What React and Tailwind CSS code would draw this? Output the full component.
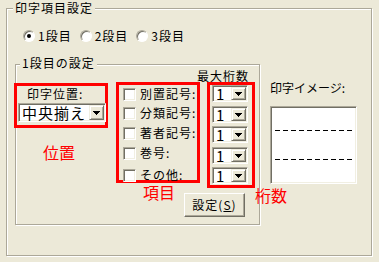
import React from "react";

const sunken =
  "border border-t-[#aca899] border-l-[#aca899] border-r-white border-b-white shadow-[inset_1px_1px_0_#716f64,inset_-1px_-1px_0_#f1efe2]";
const raised =
  "border border-t-[#f1efe2] border-l-[#f1efe2] border-r-[#716f64] border-b-[#716f64] shadow-[inset_1px_1px_0_#fff,inset_-1px_-1px_0_#aca899]";
const etched =
  "border border-[#aca899] shadow-[inset_1px_1px_0_#fff,1px_1px_0_#fff]";

function Arrow() {
  return (
    <svg width="7" height="4" viewBox="0 0 7 4" shapeRendering="crispEdges">
      <path d="M0 0h7v1H0zM1 1h5v1H1zM2 2h3v1H2zM3 3h1v1H3z" fill="#000" />
    </svg>
  );
}

function Combo({ value, className }) {
  return (
    <div className={`flex bg-white p-[1px] ${sunken} ${className}`}>
      <div className="flex-1 pl-[2px] text-[15px] leading-none flex items-center tracking-[1px]">
        {value}
      </div>
      <div className={`flex items-center justify-center bg-[#ece9d8] ${raised} w-[15px]`}>
        <Arrow />
      </div>
    </div>
  );
}

function Check({ label, className }) {
  return (
    <div className={`flex items-center h-[16px] ml-[4px] ${className}`}>
      <div className={`w-[13px] h-[13px] bg-white ${sunken}`}></div>
      <span className="ml-[4px] leading-[14px] tracking-[1px] whitespace-nowrap">{label}</span>
    </div>
  );
}

function Radio({ label, checked, className = "" }) {
  return (
    <div className={`flex items-center ${className}`}>
      <div className="w-[12px] h-[12px] rounded-full bg-white border border-t-[#aca899] border-l-[#aca899] border-r-white border-b-white shadow-[inset_1px_1px_0_#716f64] flex items-center justify-center">
        {checked && <div className="w-[4px] h-[4px] rounded-full bg-black"></div>}
      </div>
      <span className="ml-[3px] tracking-[1px]">{label}</span>
    </div>
  );
}

export default function App() {
  return (
    <div className="w-[379px] h-[262px] overflow-hidden bg-[#ece9d8] pt-[8px] pl-[6px] font-['Noto_Sans_CJK_JP',sans-serif] text-[12px] leading-[16px] text-black">
      <div className={`relative w-[366px] h-[248px] ${etched}`}>
        <span className="absolute -top-[9px] left-[6px] bg-[#ece9d8] px-[2px] tracking-[1px]">
          印字項目設定
        </span>

        <div className="flex items-center h-[16px] mt-[19px] ml-[16px]">
          <Radio checked label="1段目" />
          <Radio label="2段目" className="ml-[8px]" />
          <Radio label="3段目" className="ml-[8px]" />
        </div>

        <div className="flex items-start mt-[20px] ml-[8px]">
          <div className={`relative w-[245px] h-[161px] ${etched}`}>
            <span className="absolute -top-[10px] left-[4px] bg-[#ece9d8] px-[2px] tracking-[1px]">
              1段目の設定
            </span>

            <div className="flex items-start mt-[17px]">
              {/* 位置 */}
              <div className="flex flex-col mt-[1px] -ml-[2px]">
                <div className="w-[94px] h-[45px] border-[3px] border-[#ff0000]">
                  <div className="ml-[10px] tracking-[1px]">印字位置:</div>
                  <Combo value="中央揃え" className="ml-[1px] mt-[1px] w-[88px] h-[19px]" />
                </div>
                <div className="ml-[29px] mt-[16px] text-[16px] leading-[16px] text-[#ff0000]">位置</div>
              </div>

              {/* 項目 */}
              <div className="flex flex-col ml-[8px]">
                <div className="w-[84px] h-[101px] border-[3px] border-[#ff0000]">
                  <Check label="別置記号:" className="mt-[1px]" />
                  <Check label="分類記号:" className="mt-[3px]" />
                  <Check label="著者記号:" className="mt-[4px]" />
                  <Check label="巻号:" className="mt-[4px]" />
                  <Check label="その他:" className="mt-[6px]" />
                </div>
                <div className="ml-[27px] mt-[1px] text-[16px] leading-[16px] text-[#ff0000]">項目</div>
              </div>

              {/* 桁数 */}
              <div className="flex flex-col ml-[7px]">
                <div className="-mt-[14px] h-[14px] -ml-[10px] tracking-[1px] whitespace-nowrap">最大桁数</div>
                <div className="w-[48px] h-[106px] border-[3px] border-[#ff0000]">
                  <Combo value="1" className="ml-[2px] w-[36px] h-[17px]" />
                  <Combo value="1" className="ml-[2px] mt-[4px] w-[36px] h-[17px]" />
                  <Combo value="1" className="ml-[2px] mt-[3px] w-[36px] h-[17px]" />
                  <Combo value="1" className="ml-[2px] mt-[4px] w-[36px] h-[17px]" />
                  <Combo value="1" className="ml-[2px] mt-[3px] w-[36px] h-[17px]" />
                </div>
                <div className="flex items-start">
                  <button
                    type="button"
                    className="-ml-[23px] mt-[5px] w-[61px] h-[24px] shrink-0 bg-[#ece9d8] border border-t-white border-l-white border-r-[#716f64] border-b-[#716f64] shadow-[inset_-1px_-1px_0_#aca899] tracking-[1px] flex items-center justify-center"
                  >
                    設定(<span className="underline">S</span>)
                  </button>
                  <div className="ml-[10px] -mt-[1px] text-[16px] leading-[16px] text-[#ff0000] whitespace-nowrap">
                    桁数
                  </div>
                </div>
              </div>
            </div>
          </div>

          <div className="ml-[10px] mt-[16px]">
            <div className="whitespace-nowrap">印字イメージ:</div>
            <div className={`mt-[10px] w-[87px] h-[78px] bg-white ${sunken}`}>
              <div className="ml-[4px] mt-[23px] w-[77px] h-[1px] bg-[repeating-linear-gradient(to_right,#000_0,#000_5px,transparent_5px,transparent_8px)]"></div>
              <div className="ml-[4px] mt-[28px] w-[77px] h-[1px] bg-[repeating-linear-gradient(to_right,#000_0,#000_5px,transparent_5px,transparent_8px)]"></div>
            </div>
          </div>
        </div>
      </div>
    </div>
  );
}
